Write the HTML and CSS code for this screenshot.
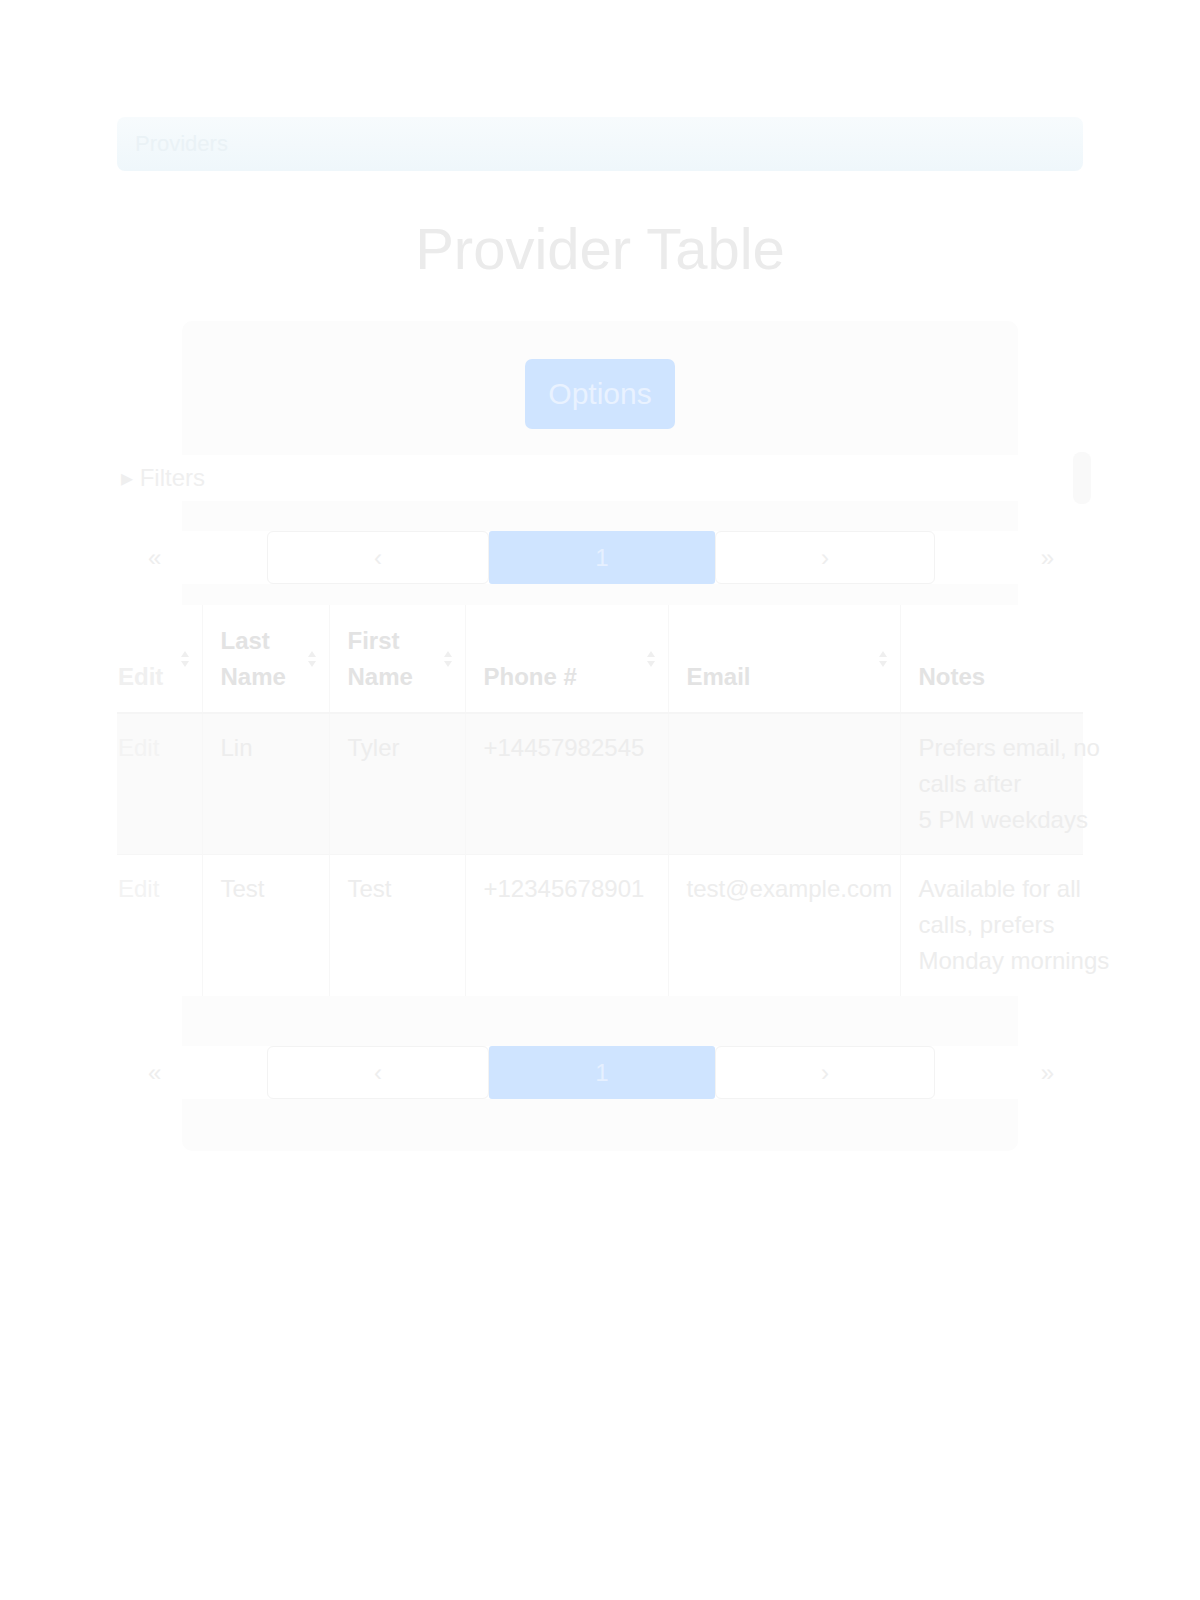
FILE: index.html
```html
<!DOCTYPE html>
<html lang="en">
<head>
<meta charset="utf-8">
<title>Provider Table</title>
<link rel="stylesheet" href="styles.css">
</head>
<body>
<nav class="navbar"><span class="brand">Providers</span></nav>
<h1 class="title">Provider Table</h1>
<div class="card">
  <div class="card-head"><button class="btn-options">Options</button></div>
  <div class="card-body">
    <div class="filter-row"><span class="filter-label">&#9656; Filters</span><span class="filter-handle"></span></div>
    <div class="pager">
      <span class="pg pg-first">&laquo;</span>
      <span class="pg pg-box">&lsaquo;</span>
      <span class="pg pg-active">1</span>
      <span class="pg pg-box">&rsaquo;</span>
      <span class="pg pg-last">&raquo;</span>
    </div>
    <table class="grid">
      <colgroup>
        <col class="c0"><col class="c1"><col class="c2"><col class="c3"><col class="c4"><col class="c5">
      </colgroup>
      <thead>
        <tr>
          <th class="first">Edit<svg class="sort" viewBox="0 0 10 18"><path d="M5 1L9 7H1z M5 17L1 11H9z"/></svg></th>
          <th>Last Name<svg class="sort" viewBox="0 0 10 18"><path d="M5 1L9 7H1z M5 17L1 11H9z"/></svg></th>
          <th>First Name<svg class="sort" viewBox="0 0 10 18"><path d="M5 1L9 7H1z M5 17L1 11H9z"/></svg></th>
          <th>Phone #<svg class="sort" viewBox="0 0 10 18"><path d="M5 1L9 7H1z M5 17L1 11H9z"/></svg></th>
          <th>Email<svg class="sort" viewBox="0 0 10 18"><path d="M5 1L9 7H1z M5 17L1 11H9z"/></svg></th>
          <th class="nosort">Notes</th>
        </tr>
      </thead>
      <tbody>
        <tr class="odd">
          <td class="first">Edit</td>
          <td>Lin</td>
          <td>Tyler</td>
          <td>+14457982545</td>
          <td></td>
          <td class="notes">Prefers email, no<br>calls after<br>5 PM weekdays</td>
        </tr>
        <tr>
          <td class="first">Edit</td>
          <td>Test</td>
          <td>Test</td>
          <td>+12345678901</td>
          <td>test@example.com</td>
          <td class="notes">Available for all<br>calls, prefers<br>Monday mornings</td>
        </tr>
      </tbody>
    </table>
    <div class="pager pager-bottom">
      <span class="pg pg-first">&laquo;</span>
      <span class="pg pg-box">&lsaquo;</span>
      <span class="pg pg-active">1</span>
      <span class="pg pg-box">&rsaquo;</span>
      <span class="pg pg-last">&raquo;</span>
    </div>
  </div>
</div>
</body>
</html>
```

FILE: styles.css
```css
* { box-sizing: border-box; }

body {
  margin: 0;
  background: #ffffff;
  font-family: "Liberation Sans", Arial, sans-serif;
  font-size: 24px;
  line-height: 36px;
  color: #ededed;
}

.navbar {
  width: 966px;
  height: 54px;
  margin: 117px auto 0;
  padding: 0 18px;
  display: flex;
  align-items: center;
  background: linear-gradient(#f7fbfd, #eff7fb);
  border-radius: 8px;
}

.brand {
  font-size: 22px;
  color: #eaf2f6;
}

.title {
  margin: 43px 0 0;
  text-align: center;
  font-size: 58px;
  line-height: 70px;
  font-weight: 500;
  color: #ebebeb;
}

.card {
  width: 836px;
  margin: 37px auto 0;
  background: #fcfcfc;
  border-radius: 10px;
  padding-bottom: 52px;
}

.card-head {
  display: flex;
  justify-content: center;
  padding: 38px 0 20px;
}

.btn-options {
  height: 70px;
  padding: 0 23px;
  border: none;
  border-radius: 7px;
  background: #cfe4ff;
  color: #e9f2ff;
  font-family: "Liberation Sans", Arial, sans-serif;
  font-size: 30px;
}

.card-body {
  padding-top: 6px;
}

.filter-row {
  margin: 0 -65px;
  height: 46px;
  padding-left: 4px;
  display: flex;
  align-items: center;
  justify-content: space-between;
  background: #ffffff;
}

.filter-label {
  color: #efefef;
  font-size: 24px;
}

.filter-handle {
  width: 18px;
  height: 52px;
  margin-right: -8px;
  border-radius: 8px;
  background: #f9f9f9;
}

.pager {
  margin: 30px -65px 0;
  display: grid;
  grid-template-columns: 150px 222px 226px 220px 1fr;
  background: #ffffff;
}

.pager-bottom {
  margin-top: 50px;
}

.pg {
  height: 53px;
  line-height: 51px;
  text-align: center;
  color: #eeeeee;
  border: 1px solid transparent;
}

.pg-first {
  text-align: left;
  padding-left: 30px;
}

.pg-last {
  text-align: right;
  padding-right: 28px;
}

.pg-box {
  border-color: #f3f3f3;
  border-radius: 6px;
}

.pg-active {
  background: #cfe4ff;
  color: #e6f0ff;
  border-radius: 3px;
}

.grid {
  margin: 21px -65px 0;
  width: 966px;
  border-collapse: collapse;
  table-layout: fixed;
  background: #ffffff;
}

.c0 { width: 85px; }
.c1 { width: 127px; }
.c2 { width: 136px; }
.c3 { width: 203px; }
.c4 { width: 232px; }
.c5 { width: 183px; }

.grid th {
  position: relative;
  padding: 18px 36px 17px 18px;
  text-align: left;
  vertical-align: bottom;
  font-weight: 700;
  color: #e3e3e3;
  border-bottom: 2px solid #f5f5f5;
  border-left: 1px solid #f7f7f7;
}

.grid th.first {
  padding-left: 1px;
  color: #f0f0f0;
  border-left: none;
}

.grid th.nosort {
  padding-right: 0;
}

.sort {
  position: absolute;
  right: 12px;
  top: 45px;
  width: 10px;
  height: 18px;
  fill: #efefef;
}

.grid td {
  padding: 16px 18px 16px 18px;
  vertical-align: top;
  border-top: 1px solid #f6f6f6;
  border-left: 1px solid #f7f7f7;
  white-space: nowrap;
}

.grid td.first {
  padding-left: 1px;
  color: #f3f3f3;
  border-left: none;
}

.grid td.notes {
  padding-right: 0;
  height: 141px;
}

.grid tr.odd td {
  background: #fafafa;
}
```
